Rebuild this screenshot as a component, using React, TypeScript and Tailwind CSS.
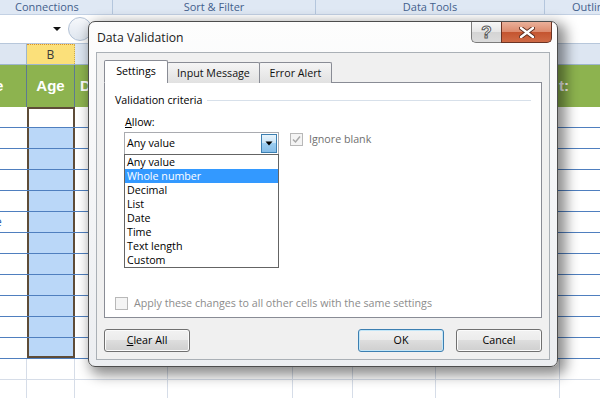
// Excel sheet with the "Data Validation" dialog open over it (Windows 7 look)

const ui = "font-['Open_Sans','Liberation_Sans',Arial,sans-serif]";

const listItems = ["Any value", "Whole number", "Decimal", "List", "Date", "Time", "Text length", "Custom"];

// widths of the sheet columns under the dialog (A, B, C, D, E, F, G)
const lowerCols = [27, 48, 93, 125, 60, 83, 124];

function WinButton({ children, focused }: { children: React.ReactNode; focused?: boolean }) {
  return (
    <div
      className={
        "w-[86px] h-[23px] rounded-[3px] border flex items-center justify-center text-black bg-[linear-gradient(#f2f2f2_0%,#ebebeb_50%,#dddddd_50%,#cfcfcf_100%)] " +
        (focused
          ? "border-[#3c7fb1] shadow-[inset_0_0_0_1px_#c2e6f8]"
          : "border-[#707070] shadow-[inset_0_0_0_1px_#fbfbfb]")
      }
    >
      {children}
    </div>
  );
}

function Sheet() {
  return (
    <div className="flex flex-col">
      {/* libellés des groupes du ruban */}
      <div className="flex h-[15px] bg-[#dfe8f4] border-b border-[#c3d1e4] text-[11px] leading-[14px] text-[#43608c] whitespace-nowrap overflow-hidden">
        <div className="w-[113px] shrink-0 pl-[15px] border-r border-[#b4c6dd]">Connections</div>
        <div className="w-[203px] shrink-0 text-center border-r border-[#b4c6dd]">Sort &amp; Filter</div>
        <div className="w-[229px] shrink-0 text-center border-r border-[#b4c6dd]">Data Tools</div>
        <div className="pl-[27px]">Outline</div>
      </div>

      {/* barre de formule */}
      <div className="flex items-center h-[29px] bg-white border-b border-[#b7c7db]">
        <div className="w-[52px]" />
        <svg width="10" height="6" viewBox="0 0 10 6">
          <path d="M1 1 L9 1 L5 5 Z" fill="#111" />
        </svg>
        <div className="ml-[6px] w-[24px] h-[24px] rounded-full border border-[#b3c2d6] bg-[linear-gradient(#f6f8fb,#dfe6ef)]" />
      </div>

      {/* en-têtes de colonnes */}
      <div className="flex h-[21px] bg-[#dde6f2] border-b border-[#9eb6ce] text-[12px] text-[#3a3a3a]">
        <div className="w-[27px] shrink-0 border-r border-[#9eb6ce]" />
        <div className="w-[48px] shrink-0 bg-[#fbe07a] border-t border-dotted border-[#d9902b] border-r border-r-[#c9a84e] flex items-center justify-center">
          B
        </div>
        <div className="flex-1" />
      </div>

      {/* ligne d'en-tête verte du tableau */}
      <div className="flex h-[42px] bg-[#8db34f] text-white font-bold text-[15px] font-['Liberation_Sans',Arial,sans-serif]">
        <div className="w-[27px] shrink-0 overflow-hidden flex items-center border-r border-[#5d7a92]">
          <span className="-ml-[5px]">e</span>
        </div>
        <div className="w-[48px] shrink-0 flex items-center justify-center border-r border-[#5d7a92]">Age</div>
        <div className="w-[484px] shrink-0 flex items-center pl-[5px]">D</div>
        <div className="flex items-center">t:</div>
      </div>

      {/* lignes de données, colonne B sélectionnée */}
      {Array.from({ length: 12 }).map((_, i) => (
        <div key={i} className="flex h-[21px] border-b border-[#4f7fbf]">
          <div className="w-[27px] shrink-0 overflow-hidden flex items-center text-[12px] text-[#2f5fa8]">
            {i === 5 && <span className="-ml-[5px]">e</span>}
          </div>
          <div
            className={
              "w-[48px] shrink-0 border-x-2 border-[#5e4c38] " +
              (i === 0 ? "bg-white border-t-2" : "bg-[#bad7f8]") +
              (i === 11 ? " border-b-2" : "")
            }
          />
          <div className="flex-1" />
        </div>
      ))}

      {/* lignes vides sous le tableau */}
      {Array.from({ length: 2 }).map((_, i) => (
        <div key={i} className="flex h-[21px] border-b border-[#d6dde8]">
          {lowerCols.map((w, j) => (
            <div key={j} className="shrink-0 border-r border-[#d6dde8]" style={{ width: w }} />
          ))}
        </div>
      ))}
    </div>
  );
}

function Checkbox({ checked }: { checked?: boolean }) {
  return (
    <div className="w-[13px] h-[13px] shrink-0 border border-[#b8b8b8] bg-[#f4f4f4] flex items-center justify-center">
      {checked && (
        <svg width="9" height="9" viewBox="0 0 9 9">
          <path d="M1 4.5 L3.5 7 L8 1.5" fill="none" stroke="#a8a8a8" strokeWidth="1.5" />
        </svg>
      )}
    </div>
  );
}

function Dialog() {
  return (
    <div className="absolute left-[88px] top-[21px] w-[470px] h-[346px] rounded-[7px] border border-[#4d4d4d] bg-[linear-gradient(#fdfdfd,#eceef1)] shadow-[5px_5px_13px_3px_rgba(0,0,0,0.45)] flex flex-col">
      {/* barre de titre */}
      <div className="flex h-[30px] shrink-0">
        <div className="pl-[8px] pt-[8px] text-[12.2px] leading-[16px] text-[#1b1b1b]">Data Validation</div>
        <div className="ml-auto mr-[5px] flex h-[21px]">
          <div className="w-[30px] rounded-bl-[5px] border border-r-0 border-t-0 border-[#7c7c7c] bg-[linear-gradient(#f7f7f7_0%,#e6e6e6_50%,#d4d4d4_50%,#dcdcdc_100%)] flex items-center justify-center">
            <span className="text-[17px] font-bold leading-none text-white [-webkit-text-stroke:1px_#5a5a5a] font-['Liberation_Sans',Arial,sans-serif]">?</span>
          </div>
          <div className="w-[51px] rounded-br-[5px] border border-t-0 border-[#6b3424] bg-[linear-gradient(#eab09a_0%,#dc8a6d_50%,#c4542f_50%,#cf6a45_100%)] flex items-center justify-center">
            <svg width="16" height="11" viewBox="0 0 16 11">
              <path d="M2 1 L14 10 M14 1 L2 10" stroke="#5a2a1c" strokeWidth="4.2" strokeLinecap="round" />
              <path d="M2 1 L14 10 M14 1 L2 10" stroke="#ffffff" strokeWidth="2.4" strokeLinecap="round" />
            </svg>
          </div>
        </div>
      </div>

      {/* zone client */}
      <div className={"mx-[7px] h-[308px] border border-[#aab0b6] bg-[#f0f0f0] px-[7px] pt-[7px] flex flex-col text-[10.7px] " + ui}>
        {/* onglets */}
        <div className="flex items-end h-[23px] -mb-px relative z-10">
          <div className="w-[64px] h-[23px] bg-white border border-[#898c95] border-b-white rounded-t-[2px] flex items-center justify-center text-black">
            Settings
          </div>
          <div className="w-[93px] h-[21px] -ml-px border border-[#898c95] border-b-0 rounded-t-[2px] bg-[linear-gradient(#f5f5f5,#e1e1e1)] flex items-center justify-center text-[#111]">
            Input Message
          </div>
          <div className="w-[73px] h-[21px] -ml-px border border-[#898c95] border-b-0 rounded-t-[2px] bg-[linear-gradient(#f5f5f5,#e1e1e1)] flex items-center justify-center text-[#111]">
            Error Alert
          </div>
        </div>

        {/* panneau Settings */}
        <div className="h-[236px] shrink-0 border border-[#898c95] bg-white px-[10px] flex flex-col">
          <div className="mt-[10px] h-[14px] flex items-center text-black">
            <span>Validation criteria</span>
            <div className="flex-1 ml-[5px] border-t border-[#d7e0ea]" />
          </div>

          <div className="mt-[8px] ml-[10px] h-[14px] leading-[14px] text-black">
            <span className="underline">A</span>llow:
          </div>

          <div className="mt-[3px] ml-[9px] flex items-start">
            <div className="relative w-[155px] h-[23px] shrink-0 border border-[#a9abb0] bg-white flex items-center">
              <span className="pl-[2px] text-black">Any value</span>
              <div className="ml-auto mr-px w-[16px] h-[19px] border border-[#3c7fb1] bg-[linear-gradient(#e8f4fc_0%,#c7e3f7_50%,#9ccdf0_50%,#86bde8_100%)] flex items-center justify-center">
                <svg width="8" height="5" viewBox="0 0 8 5">
                  <path d="M0.5 0.5 L7.5 0.5 L4 4.5 Z" fill="#000" />
                </svg>
              </div>
              {/* liste déroulante ouverte */}
              <div className="absolute left-[-1px] top-[21px] w-[155px] border border-[#646464] bg-white z-20">
                {listItems.map((it, i) => (
                  <div
                    key={it}
                    className={"h-[14px] leading-[14px] pl-[2px] " + (i === 1 ? "bg-[#3399ff] text-white" : "text-black")}
                  >
                    {it}
                  </div>
                ))}
              </div>
            </div>
            <div className="ml-[11px] mt-px flex items-center h-[13px]">
              <Checkbox checked />
              <span className="ml-[6px] text-[#707070]">Ignore blank</span>
            </div>
          </div>

          <div className="mt-auto mb-[7px] flex items-center h-[14px]">
            <Checkbox />
            <span className="ml-[6px] text-[#8c8c8c]">Apply these changes to all other cells with the same settings</span>
          </div>
        </div>

        {/* boutons */}
        <div className="mt-[11px] flex">
          <WinButton>
            <span>
              <span className="underline">C</span>lear All
            </span>
          </WinButton>
          <div className="ml-auto flex gap-[12px]">
            <WinButton focused>OK</WinButton>
            <WinButton>Cancel</WinButton>
          </div>
        </div>
      </div>
    </div>
  );
}

export default function App() {
  return (
    <div className={"relative w-[600px] h-[398px] overflow-hidden bg-white " + ui}>
      <Sheet />
      <Dialog />
    </div>
  );
}
